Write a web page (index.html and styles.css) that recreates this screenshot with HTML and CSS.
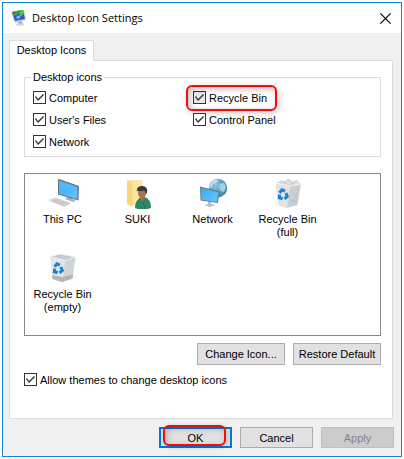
FILE: index.html
```html
<!DOCTYPE html>
<html lang="en">
<head>
<meta charset="utf-8">
<title>Desktop Icon Settings</title>
<link rel="stylesheet" href="styles.css">
</head>
<body>
<svg class="defs" aria-hidden="true">
  <defs>
    <linearGradient id="screen" x1="0" y1="0" x2="1" y2="1">
      <stop offset="0" stop-color="#39a9f0"/><stop offset="1" stop-color="#62c8ff"/>
    </linearGradient>
    <linearGradient id="folder" x1="0" y1="0" x2="1" y2="0">
      <stop offset="0" stop-color="#ffe08a"/><stop offset="1" stop-color="#f6cf6c"/>
    </linearGradient>
    <radialGradient id="globe" cx="0.4" cy="0.35" r="0.7">
      <stop offset="0" stop-color="#8cc6e2"/><stop offset="1" stop-color="#3c7fa8"/>
    </radialGradient>
    <g id="recycle" fill="none" stroke="#1683d8" stroke-width="3">
      <path d="M7.500 15.800 L10 12.800 L13 14.200"/>
      <path d="M14 16 L15.300 19.500 L12.500 21.800"/>
      <path d="M10.600 21.800 L7.400 20.800 L7.600 17.600"/>
    </g>
  </defs>
</svg>
<main class="dialog">
  <header class="titlebar">
    <svg class="title-icon" viewBox="0 0 16 18" aria-hidden="true">
      <path d="M0 3 L13 1 L15 11 L4 14Z" fill="#c9d1dc"/>
      <path d="M1 3 L12 1 L14 10 L4 12Z" fill="#3157c4"/>
      <path d="M1 3 L9 1 L7 5 L4 7 L2 7Z" fill="#31a94a"/>
      <path d="M9 1 L12 1 L13 5 L10 7 L8 4Z" fill="#49c653"/>
      <path d="M6 7 L10 6 L8 10 L5 9Z" fill="#7db6ff"/>
      <path d="M2 3h3v2h-3z" fill="#d14a3c"/>
      <path d="M7 13 L11 12 L12 15 L8 16Z" fill="#a4acb4"/>
      <path d="M4 15 L12 14 L14 16 L7 17Z" fill="#d2d6da"/>
    </svg>
    <h1 class="title">Desktop Icon Settings</h1>
    <button class="close" type="button" aria-label="Close">
      <svg viewBox="0 0 10 10" aria-hidden="true"><path d="M0.300 0.300 L9.700 9.700 M9.700 0.300 L0.300 9.700" stroke="#000" stroke-width="1.100"/></svg>
    </button>
  </header>
  <form class="content">
    <div class="tabs" role="tablist">
      <button class="tab" type="button" role="tab" aria-selected="true">Desktop Icons</button>
    </div>
    <section class="panel">
      <fieldset class="group">
        <legend>Desktop icons</legend>
        <div class="checks">
          <label class="check"><input type="checkbox" checked>Computer</label>
          <label class="check marked"><input type="checkbox" checked>Recycle Bin</label>
          <label class="check"><input type="checkbox" checked>User's Files</label>
          <label class="check"><input type="checkbox" checked>Control Panel</label>
          <label class="check"><input type="checkbox" checked>Network</label>
        </div>
      </fieldset>
      <ul class="icons">
        <li class="item">
          <svg class="icon" viewBox="0 0 32 32" aria-hidden="true">
            <path d="M21 19 L25 20 L25 22 L29 23 L26 25 L18 22Z" fill="#aab2b8"/>
            <path d="M11 2.500 L12 2 L32 9 L31.500 23.500 L11 17.500Z" fill="#69747c"/>
            <path d="M12 3.500 L30.500 10 L30.300 22 L12 16.700Z" fill="url(#screen)"/>
            <path d="M12 3.500 L30.500 10 L12 12Z" fill="#68c6fb" opacity="0.35"/>
            <path d="M1 23 L8.500 20.500 L24.500 26 L17 30Z" fill="#d6dade"/>
            <path d="M4 23.800 L18.500 28.800 M6 22.900 L20.500 27.900 M8 22 L22.500 26.900 M6 25.500 L12 22.500 M10 27 L16 24 M14 28 L20 25" stroke="#adb4ba" stroke-width="0.5"/>
          </svg>
          <span>This PC</span>
        </li>
        <li class="item">
          <svg class="icon" viewBox="0 0 32 32" aria-hidden="true">
            <path d="M5 3.500 H20 V28 H8 L5 27Z" fill="url(#folder)"/>
            <path d="M10 5 L20.500 3.500 V26 L10 28Z" fill="#fce6a0"/>
            <path d="M5 3.500 L10.500 6 V30 L5 27Z" fill="#f8d77c"/>
            <path d="M13 31 C13 24 17 20 21 20 C26 20 29 24 29 31 C24 33 17 33 13 31Z" fill="#2d8965"/>
            <path d="M18 20 L20 25 L23 20.500Z" fill="#a06d4b"/>
            <path d="M16 13 H24 V16 C24 19 22 21.500 20 21.500 C18 21.500 16 19 16 16Z" fill="#a8744f"/>
            <path d="M15 15 C14 11 17 9 20 9 C24 9 26 12 25 16 L24 17 C24 15 23 14 22 13.500 C19 14.500 17 14 15.500 13.500Z" fill="#3e3830"/>
            <path d="M21 25 L23 31" stroke="#1c6a4b" stroke-width="0.7"/>
          </svg>
          <span>SUKI</span>
        </li>
        <li class="item">
          <svg class="icon" viewBox="0 0 32 32" aria-hidden="true">
            <circle cx="21" cy="11" r="9.200" fill="url(#globe)"/>
            <path d="M14 6 C17 2 20 2 22 3 L19 6 L16 7 L15 10 L12 11Z" fill="#bddfea"/>
            <path d="M23 7 L27 6 L29 10 L27 15 L24 14 L22 10Z" fill="#a7d1e2"/>
            <path d="M11 24 L14 25 V27 L19 28 L13 30 L7 28 L11 27Z" fill="#b7bfc5"/>
            <path d="M3 9.500 L22.500 14.500 L21 26 L3.500 23.500Z" fill="#697781"/>
            <path d="M4 10.700 L21.300 15.200 L20 24.900 L4.500 22.700Z" fill="url(#screen)"/>
          </svg>
          <span>Network</span>
        </li>
        <li class="item">
          <svg class="icon" viewBox="0 0 32 32" aria-hidden="true">
            <path d="M4 6 L9 3 L12 4 L16 1.500 L21 4 L25 3 L29 7 L18 10Z" fill="#e0e2e4"/>
            <path d="M9 3 L13 7 L16 2 L20 8 L25 3 M5 6 L11 5 L17 8 L23 5" stroke="#c1c5c8" stroke-width="0.7" fill="none"/>
            <path d="M3.500 6 L18 9 L15 31 L6 28Z" fill="#e0e2e4"/>
            <path d="M18 9 L29 7 L25.500 28 L15 31Z" fill="#cbcfd2"/>
            <path d="M18 13 L23 19 L27 12 M17 20 L22 27 L26 18 M18 27 L23 20" stroke="#b8bdc1" stroke-width="0.7" fill="none"/>
            <path d="M3.500 6 L18 9 L29 7" stroke="#f3f4f4" fill="none"/>
            <use href="#recycle"/>
          </svg>
          <span>Recycle Bin (full)</span>
        </li>
        <li class="item">
          <svg class="icon" viewBox="0 0 32 32" aria-hidden="true">
            <path d="M3 4.700 L13 2 L28.500 5 L18 8.500Z" fill="#c5cacd"/>
            <path d="M3 4.700 L18 8.500 L15 30 L5.500 27Z" fill="#e3e6e8"/>
            <path d="M18 8.500 L28.500 5 L25.500 26.500 L15 30Z" fill="#d0d4d7"/>
            <path d="M5 23 L15.500 25 L26 22.500 L25.500 26.500 L15 30 L5.500 27Z" fill="#b1b6ba"/>
            <path d="M3 4.700 L13 2 L28.500 5 L18 8.500Z" fill="none" stroke="#f0f2f3" stroke-width="0.8"/>
            <use href="#recycle" y="-1"/>
          </svg>
          <span>Recycle Bin (empty)</span>
        </li>
      </ul>
      <div class="actions">
        <button class="btn wide" type="button">Change Icon...</button>
        <button class="btn wide" type="button">Restore Default</button>
      </div>
      <label class="check themes"><input type="checkbox" checked>Allow themes to change desktop icons</label>
    </section>
    <footer class="footer">
      <button class="btn primary" type="button">OK</button>
      <button class="btn" type="button">Cancel</button>
      <button class="btn" type="button" disabled>Apply</button>
    </footer>
  </form>
</main>
</body>
</html>
```
FILE: styles.css
```css
* {
  box-sizing: border-box;
}

body {
  margin: 0;
  padding: 2px;
  background: #fff;
  color: #000;
  font: 11px/14px "Liberation Sans", Arial, sans-serif;
}

button {
  font: inherit;
  color: inherit;
}

.defs {
  position: absolute;
  width: 0;
  height: 0;
}

.dialog {
  border: 1px solid #1883d7;
  background: #f0f0f0;
}

.titlebar {
  display: flex;
  align-items: center;
  height: 30px;
  padding: 0 10px 0 8px;
  background: #fff;
}

.title-icon {
  width: 16px;
  height: 18px;
}

.title {
  flex: 1;
  margin: 0 0 0 5px;
  font: 11px/16px "Open Sans", "Noto Sans", sans-serif;
}

.close {
  display: flex;
  padding: 0;
  border: 0;
  background: none;
}

.close svg {
  width: 11px;
  height: 11px;
}

.content {
  padding: 7px 7px 8px 6px;
}

.tabs {
  display: flex;
}

.tab {
  position: relative;
  z-index: 1;
  width: 85px;
  height: 21px;
  margin-bottom: -1px;
  padding: 0 0 2px;
  border: 1px solid #dcdcdc;
  border-bottom: 0;
  background: #fff;
}

.panel {
  margin-right: 1px;
  padding: 9px 11px 32px 14px;
  border: 1px solid #dcdcdc;
  background: #fff;
}

.group {
  min-width: 0;
  margin: 0;
  padding: 7px 8px 8px;
  border: 1px solid #dcdcdc;
}

.group legend {
  margin-left: -2px;
  padding: 0 2px;
}

.checks {
  display: grid;
  grid-template-columns: 160px 1fr;
  gap: 9px 0;
}

.check {
  position: relative;
  display: flex;
  align-items: center;
  gap: 3px;
  height: 13px;
  justify-self: start;
}

.check input {
  flex: none;
  appearance: none;
  width: 13px;
  height: 13px;
  margin: 0;
  border: 1px solid #333;
  background: #fff;
}

.check input:checked::before {
  content: "";
  display: block;
  width: 11px;
  height: 11px;
  background: #333;
  clip-path: polygon(1px 5px, 2px 4px, 4px 7px, 9px 2px, 10px 3px, 4px 9px);
}

.marked::before {
  content: "";
  position: absolute;
  inset: -6px -10px -7px -7px;
  border: 2px solid #f00d12;
  border-radius: 6px;
  box-shadow: 2px 2px 6px #0003, inset 2px 2px 6px #0004;
}

.marked input {
  background: #e8e8e8;
}

.icons {
  display: grid;
  grid-template-columns: repeat(auto-fill, 75px);
  gap: 13px 0;
  margin: 16px 0 0;
  padding: 3px 0 21px;
  border: 1px solid #828790;
  list-style: none;
}

.item {
  display: flex;
  flex-direction: column;
  align-items: center;
  gap: 4px;
  padding: 0 4px;
  min-height: 62px;
  line-height: 13px;
  text-align: center;
}

.icon {
  width: 32px;
  height: 32px;
}

.actions,
.footer {
  display: flex;
  justify-content: flex-end;
  gap: 8px;
}

.actions {
  margin: 7px 0 8px;
}

.footer {
  margin-top: 8px;
}

.btn {
  position: relative;
  width: 73px;
  height: 21px;
  padding: 0;
  border: 1px solid #adadad;
  background: #e1e1e1;
  white-space: nowrap;
}

.wide {
  width: 88px;
  height: 22px;
}

.primary {
  border: 2px solid #0078d7;
}

.primary::after {
  content: "";
  position: absolute;
  inset: -4px 4px 0 2px;
  border: 2px solid #f00d12;
  border-radius: 6px;
  box-shadow: 1px 1px 4px #0003, inset 2px 2px 6px #0003;
}

.btn:disabled {
  border-color: #bfbfbf;
  background: #ccc;
  color: #838383;
}
```
